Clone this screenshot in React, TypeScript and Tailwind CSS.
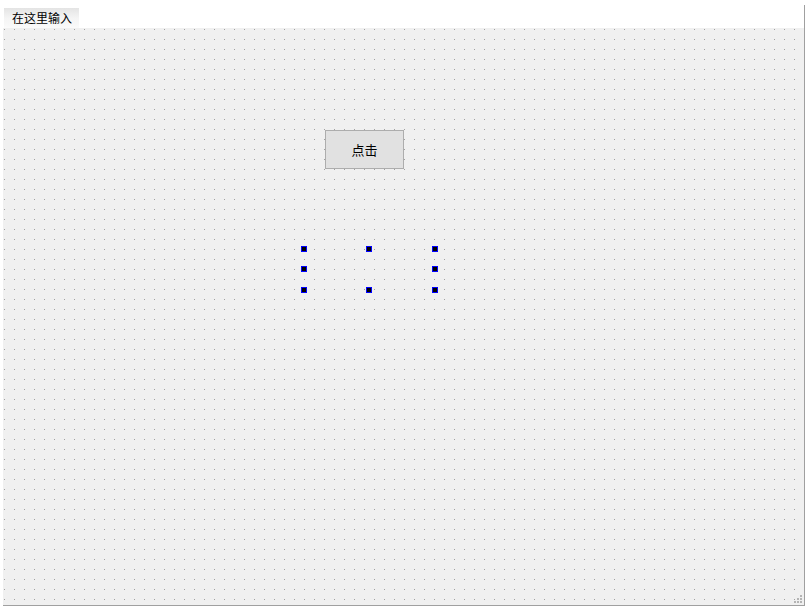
import React from "react";

const handles: [number, number][] = [
  [298, 218],
  [363, 218],
  [429, 218],
  [298, 238],
  [429, 238],
  [298, 259],
  [363, 259],
  [429, 259],
];

export default function App() {
  const font = { fontFamily: '"Microsoft YaHei", "Noto Sans CJK SC", "Liberation Sans", sans-serif' };
  return (
    <div className="w-[812px] h-[616px] bg-white overflow-hidden" style={font}>
      <div className="mt-[5px] w-[805px] border-r border-[#a0a0a0]">
        <div className="h-[23px] pl-[4px] pt-[3px] flex">
          <div className="h-[20px] w-[75px] flex items-center pl-[8px] text-[12px] leading-none text-black bg-gradient-to-b from-[#e4e4e4] via-[#f4f4f4] to-[#fafafa]">
            在这里输入
          </div>
        </div>
        <div className="relative ml-[3px] h-[578px] bg-[#f0f0f0] border-b border-[#a0a0a0]">
          <svg className="absolute inset-0" width="802" height="577">
            <defs>
              <pattern id="dots" x="0" y="0" width="10" height="10" patternUnits="userSpaceOnUse">
                <rect x="1" y="1" width="1" height="1" fill="#a0a0a0" />
              </pattern>
            </defs>
            <rect width="802" height="577" fill="url(#dots)" />
          </svg>
          <div className="absolute left-[322px] top-[102px] w-[79px] h-[39px] border border-[#adadad] bg-[#e1e1e1] flex items-center justify-center text-[13px] text-black">
            点击
          </div>
          {handles.map(([x, y], i) => (
            <div
              key={i}
              className="absolute w-[6px] h-[6px] border border-[#0000ff] bg-black"
              style={{ left: x, top: y }}
            />
          ))}
          <svg className="absolute right-[1px] bottom-[1px]" width="10" height="10" viewBox="0 0 10 10">
            <rect x="7" y="1" width="2" height="2" fill="#b4b4b4" />
            <rect x="4" y="4" width="2" height="2" fill="#b4b4b4" />
            <rect x="7" y="4" width="2" height="2" fill="#b4b4b4" />
            <rect x="1" y="7" width="2" height="2" fill="#b4b4b4" />
            <rect x="4" y="7" width="2" height="2" fill="#b4b4b4" />
            <rect x="7" y="7" width="2" height="2" fill="#b4b4b4" />
          </svg>
        </div>
      </div>
    </div>
  );
}
